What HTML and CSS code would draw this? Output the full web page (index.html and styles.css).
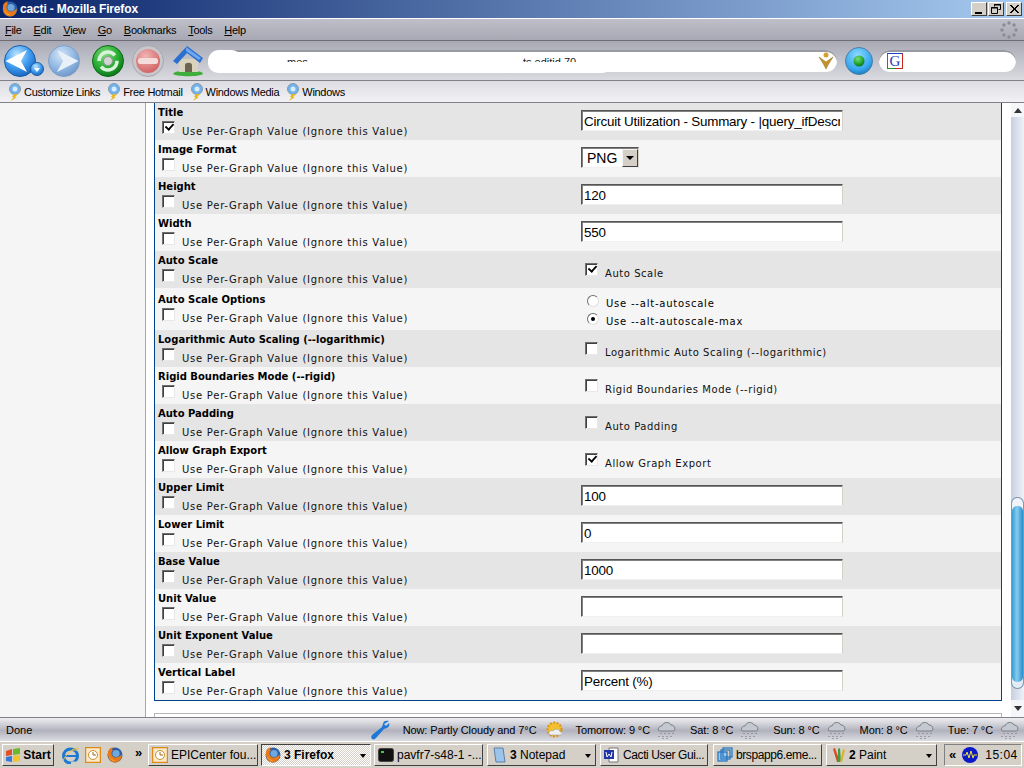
FILE: index.html
```html
<!DOCTYPE html>
<html lang="en">
<head>
<meta charset="utf-8">
<title>cacti - Mozilla Firefox</title>
<link rel="stylesheet" href="styles.css">
</head>
<body>
<svg class="defs" aria-hidden="true">
  <defs>
    <radialGradient id="gBlue" cx="40%" cy="30%" r="75%"><stop offset="0" stop-color="#bfe6ff"/><stop offset=".55" stop-color="#3f9cf0"/><stop offset="1" stop-color="#1560b8"/></radialGradient>
    <radialGradient id="gPale" cx="40%" cy="30%" r="75%"><stop offset="0" stop-color="#d4e4f6"/><stop offset=".6" stop-color="#8fb6e2"/><stop offset="1" stop-color="#6c94c6"/></radialGradient>
    <radialGradient id="gGreen" cx="40%" cy="30%" r="75%"><stop offset="0" stop-color="#7edc7e"/><stop offset=".6" stop-color="#25a830"/><stop offset="1" stop-color="#0b6f18"/></radialGradient>
    <radialGradient id="gStop" cx="40%" cy="30%" r="75%"><stop offset="0" stop-color="#f0b4b4"/><stop offset="1" stop-color="#d05f5f"/></radialGradient>
    <radialGradient id="gCyan" cx="45%" cy="30%" r="75%"><stop offset="0" stop-color="#8fdcff"/><stop offset=".7" stop-color="#35a6ee"/><stop offset="1" stop-color="#166fb8"/></radialGradient>
    <symbol id="i-ff" viewBox="0 0 16 16"><circle cx="8" cy="8" r="7.5" fill="#2a5fa8"/><circle cx="9" cy="6.5" r="3.6" fill="#6fa8dc"/><path d="M1 6C1 2 4 .5 6 .5 4.800 2 5 3 6 3.500 4.200 4.500 4 7 5.500 9 7.500 11.500 11.500 11 14.800 7.500 15 12 12 15.500 8 15.500 3.500 15.500 .5 11.500 1 6Z" fill="#e8791a"/><path d="M2 9C3 12 5.500 14.200 8.500 14 5 13 3.500 11 2 9Z" fill="#f9c23c"/></symbol>
    <symbol id="i-back" viewBox="0 0 32 32"><circle cx="16" cy="16" r="15.500" fill="url(#gBlue)" stroke="#1a5ea8"/><path d="M1.500 16 23 5 17 16 23 27Z" fill="#fff"/></symbol>
    <symbol id="i-fwd" viewBox="0 0 32 32"><circle cx="16" cy="16" r="15.500" fill="url(#gPale)" stroke="#7f9fc6"/><path d="M30.500 16 9 5 15 16 9 27Z" fill="#e8f0fa"/></symbol>
    <symbol id="i-reload" viewBox="0 0 32 32"><circle cx="16" cy="16" r="15.500" fill="url(#gGreen)" stroke="#0d6a1a"/><circle cx="16" cy="16" r="9" fill="none" stroke="#d8f4d8" stroke-width="3.500" stroke-dasharray="22 6"/><circle cx="16" cy="16" r="4.500" fill="#d4d4d4" stroke="#8a9a8a"/></symbol>
    <symbol id="i-stop" viewBox="0 0 32 32"><circle cx="16" cy="16" r="15.500" fill="#c8c8cc" stroke="#a8a8ac"/><circle cx="16" cy="16" r="12" fill="url(#gStop)"/><rect x="6" y="13" width="20" height="6" rx="2.500" fill="#f4dcdc"/></symbol>
    <symbol id="i-home" viewBox="0 0 32 32"><path d="M1 29C3 26 6 27 8 26H25C27 27 30 26 31 29 27 32 5 32 1 29Z" fill="#3fae3a"/><path d="M7 14H26V27H7Z" fill="#d9d2bc"/><path d="M13 27V20C13 17 20 17 20 20V27Z" fill="#6b6450"/><path d="M8 4V11L10 9V2Z" fill="#b8b0a0"/><path d="M1 16 15 1 31 13 28 18 15 8 5 19Z" fill="#2b6fd0"/><path d="M14 2 29 13 27 15 14 6Z" fill="#6ea8ee"/></symbol>
    <symbol id="i-go" viewBox="0 0 28 28"><circle cx="14" cy="14" r="13.500" fill="url(#gCyan)" stroke="#4a7fa8"/><circle cx="14" cy="14" r="5.500" fill="url(#gGreen)"/></symbol>
    <symbol id="i-bm" viewBox="0 0 14 18"><circle cx="7" cy="6" r="5.500" fill="#6fb4ee" stroke="#8a9aa8"/><circle cx="7" cy="6" r="2.500" fill="#d8ecfc"/><path d="M6 11H10L7 14 9 14 3 18 5.500 14 4 14Z" fill="#e8b820"/></symbol>
    <symbol id="i-rain" viewBox="0 0 21 20"><path d="M3 11C1 8 4 6 6 6 7 2 13 1 15 5 18 5 20 8 18 11Z" fill="#c4c8d0" stroke="#7a7f88"/><path d="M5 13V15M9 13V15M13 13V15M17 13V15M3 16V18M7 16V19M11 16V19M15 16V18" stroke="#6c7078" stroke-dasharray="1 1" fill="none"/></symbol>
    <symbol id="i-clock" viewBox="0 0 16 16"><rect x=".5" y=".5" width="15" height="15" fill="#fbe9c8" stroke="#dd8a1c" stroke-width="1.500"/><circle cx="8" cy="8" r="4.500" fill="#fff" stroke="#c89030"/><path d="M8 5V8H11" fill="none" stroke="#a06818"/></symbol>
  </defs>
</svg>
<div class="window">
  <header class="titlebar">
    <svg class="ic16"><use href="#i-ff"/></svg>
    <span class="title-text">cacti - Mozilla Firefox</span>
    <div class="win-btns">
      <span class="win-btn"><svg width="14" height="12"><rect x="3" y="9" width="7" height="2" fill="#000"/></svg></span>
      <span class="win-btn"><svg width="14" height="12"><path d="M5.500 3.500V1.500H11.500V6.500H9.500M2.500 4.500H8.500V10.500H2.500Z" fill="none" stroke="#000"/><path d="M5 2H12M2 5H9" stroke="#000"/></svg></span>
      <span class="win-btn win-close"><svg width="14" height="12"><path d="M3 2 11 10M4 2 12 10M11 2 3 10M12 2 4 10" stroke="#000"/></svg></span>
    </div>
  </header>
  <nav class="menubar">
    <span class="menu"><u>F</u>ile</span>
    <span class="menu"><u>E</u>dit</span>
    <span class="menu"><u>V</u>iew</span>
    <span class="menu"><u>G</u>o</span>
    <span class="menu"><u>B</u>ookmarks</span>
    <span class="menu"><u>T</u>ools</span>
    <span class="menu"><u>H</u>elp</span>
    <svg class="throbber" width="18" height="18"><g fill="#8c8c94"><circle cx="9" cy="2" r="1.700"/><circle cx="14" cy="4" r="1.700"/><circle cx="16" cy="9" r="1.700"/><circle cx="14" cy="14" r="1.700"/><circle cx="9" cy="16" r="1.700"/><circle cx="4" cy="14" r="1.700"/><circle cx="2" cy="9" r="1.700"/><circle cx="4" cy="4" r="1.700"/></g></svg>
  </nav>
  <div class="navbar">
    <span class="back-wrap">
      <svg class="ic32"><use href="#i-back"/></svg>
      <svg class="back-drop" width="14" height="14"><circle cx="7" cy="7" r="6.500" fill="url(#gBlue)" stroke="#1a5ea8"/><path d="M4 6H10L7 10Z" fill="#fff"/></svg>
    </span>
    <svg class="ic32 fwd"><use href="#i-fwd"/></svg>
    <svg class="ic32 reload"><use href="#i-reload"/></svg>
    <svg class="ic32 stop"><use href="#i-stop"/></svg>
    <svg class="ic32 home"><use href="#i-home"/></svg>
    <div class="urlbar">
      <span class="url-blob"></span>
      <span class="url-blob-left"></span>
      <span class="url-frag frag-a">mes</span>
      <span class="url-frag frag-b">ts editid 70</span>
      <svg class="url-icon" width="16" height="18" viewBox="0 0 16 18"><circle cx="8" cy="3" r="2.500" fill="#d8a030"/><path d="M1 5 8 10 15 5 10 13 8 17 6 13Z" fill="#c89028" stroke="#8a6a20" stroke-width=".5"/></svg>
    </div>
    <svg class="go" width="28" height="28"><use href="#i-go"/></svg>
    <div class="searchbar">
      <svg width="16" height="16" class="g-box"><rect x=".5" y=".5" width="15" height="15" fill="#fff" stroke="#2a8a2a"/><path d="M15.500 .5V15.500H8" fill="none" stroke="#d02020"/><path d="M.5 .5H15.500" stroke="#2040c0"/><text x="2.500" y="13" class="g-text">G</text></svg>
    </div>
  </div>
  <div class="bookmarks">
    <span class="bm"><svg class="bm-ic"><use href="#i-bm"/></svg>Customize Links</span>
    <span class="bm"><svg class="bm-ic"><use href="#i-bm"/></svg>Free Hotmail</span>
    <span class="bm"><svg class="bm-ic"><use href="#i-bm"/></svg>Windows Media</span>
    <span class="bm"><svg class="bm-ic"><use href="#i-bm"/></svg>Windows</span>
  </div>
  <div class="viewport">
    <aside class="sidebar"></aside>
    <main class="content">
      <section class="panel">
        <div class="row">
          <div class="lcell"><div class="lbl">Title</div><div class="use"><input class="cb" type="checkbox" checked><span class="use-text">Use Per-Graph Value (Ignore this Value)</span></div></div>
          <div class="rcell"><input class="txt" type="text" value="Circuit Utilization - Summary - |query_ifDescr|"></div>
        </div>
        <div class="row alt">
          <div class="lcell"><div class="lbl">Image Format</div><div class="use"><input class="cb" type="checkbox"><span class="use-text">Use Per-Graph Value (Ignore this Value)</span></div></div>
          <div class="rcell"><span class="sel-wrap"><select class="sel"><option>PNG</option></select><span class="sel-btn"></span></span></div>
        </div>
        <div class="row">
          <div class="lcell"><div class="lbl">Height</div><div class="use"><input class="cb" type="checkbox"><span class="use-text">Use Per-Graph Value (Ignore this Value)</span></div></div>
          <div class="rcell"><input class="txt" type="text" value="120"></div>
        </div>
        <div class="row alt">
          <div class="lcell"><div class="lbl">Width</div><div class="use"><input class="cb" type="checkbox"><span class="use-text">Use Per-Graph Value (Ignore this Value)</span></div></div>
          <div class="rcell"><input class="txt" type="text" value="550"></div>
        </div>
        <div class="row">
          <div class="lcell"><div class="lbl">Auto Scale</div><div class="use"><input class="cb" type="checkbox"><span class="use-text">Use Per-Graph Value (Ignore this Value)</span></div></div>
          <div class="rcell check-cell"><input class="cb" type="checkbox" checked><span class="use-text">Auto Scale</span></div>
        </div>
        <div class="row alt row-tall">
          <div class="lcell"><div class="lbl">Auto Scale Options</div><div class="use"><input class="cb" type="checkbox"><span class="use-text">Use Per-Graph Value (Ignore this Value)</span></div></div>
          <div class="rcell radio-cell">
            <div class="radio-line"><input class="rb" type="radio" name="as"><span class="radio-text">Use --alt-autoscale</span></div>
            <div class="radio-line"><input class="rb" type="radio" name="as" checked><span class="radio-text">Use --alt-autoscale-max</span></div>
          </div>
        </div>
        <div class="row">
          <div class="lcell"><div class="lbl">Logarithmic Auto Scaling (--logarithmic)</div><div class="use"><input class="cb" type="checkbox"><span class="use-text">Use Per-Graph Value (Ignore this Value)</span></div></div>
          <div class="rcell check-cell"><input class="cb" type="checkbox"><span class="use-text">Logarithmic Auto Scaling (--logarithmic)</span></div>
        </div>
        <div class="row alt">
          <div class="lcell"><div class="lbl">Rigid Boundaries Mode (--rigid)</div><div class="use"><input class="cb" type="checkbox"><span class="use-text">Use Per-Graph Value (Ignore this Value)</span></div></div>
          <div class="rcell check-cell"><input class="cb" type="checkbox"><span class="use-text">Rigid Boundaries Mode (--rigid)</span></div>
        </div>
        <div class="row">
          <div class="lcell"><div class="lbl">Auto Padding</div><div class="use"><input class="cb" type="checkbox"><span class="use-text">Use Per-Graph Value (Ignore this Value)</span></div></div>
          <div class="rcell check-cell"><input class="cb" type="checkbox"><span class="use-text">Auto Padding</span></div>
        </div>
        <div class="row alt">
          <div class="lcell"><div class="lbl">Allow Graph Export</div><div class="use"><input class="cb" type="checkbox"><span class="use-text">Use Per-Graph Value (Ignore this Value)</span></div></div>
          <div class="rcell check-cell"><input class="cb" type="checkbox" checked><span class="use-text">Allow Graph Export</span></div>
        </div>
        <div class="row">
          <div class="lcell"><div class="lbl">Upper Limit</div><div class="use"><input class="cb" type="checkbox"><span class="use-text">Use Per-Graph Value (Ignore this Value)</span></div></div>
          <div class="rcell"><input class="txt" type="text" value="100"></div>
        </div>
        <div class="row alt">
          <div class="lcell"><div class="lbl">Lower Limit</div><div class="use"><input class="cb" type="checkbox"><span class="use-text">Use Per-Graph Value (Ignore this Value)</span></div></div>
          <div class="rcell"><input class="txt" type="text" value="0"></div>
        </div>
        <div class="row">
          <div class="lcell"><div class="lbl">Base Value</div><div class="use"><input class="cb" type="checkbox"><span class="use-text">Use Per-Graph Value (Ignore this Value)</span></div></div>
          <div class="rcell"><input class="txt" type="text" value="1000"></div>
        </div>
        <div class="row alt">
          <div class="lcell"><div class="lbl">Unit Value</div><div class="use"><input class="cb" type="checkbox"><span class="use-text">Use Per-Graph Value (Ignore this Value)</span></div></div>
          <div class="rcell"><input class="txt" type="text" value=""></div>
        </div>
        <div class="row">
          <div class="lcell"><div class="lbl">Unit Exponent Value</div><div class="use"><input class="cb" type="checkbox"><span class="use-text">Use Per-Graph Value (Ignore this Value)</span></div></div>
          <div class="rcell"><input class="txt" type="text" value=""></div>
        </div>
        <div class="row alt">
          <div class="lcell"><div class="lbl">Vertical Label</div><div class="use"><input class="cb" type="checkbox"><span class="use-text">Use Per-Graph Value (Ignore this Value)</span></div></div>
          <div class="rcell"><input class="txt" type="text" value="Percent (%)"></div>
        </div>
      </section>
      <div class="next-panel"></div>
    </main>
    <div class="scrollbar">
      <span class="sb-btn"><span class="arrow-up"></span></span>
      <span class="sb-thumb"></span>
      <span class="sb-btn sb-down"><span class="arrow-down"></span></span>
    </div>
  </div>
  <footer class="statusbar">
    <span class="done">Done</span>
    <svg class="wrench" width="19" height="20" viewBox="0 0 19 20"><path d="M18 1C15 0 12 1 12 4L11 7 1 15C0 16 0 18 1 19 3 20 4 19 5 18L13 9 16 8C18 7 19 4 18 3L15 6 13 4Z" fill="#1f78d6"/></svg>
    <span class="wx wx-now">Now: Partly Cloudy and 7°C</span>
    <svg class="wx-sun" width="21" height="21" viewBox="0 0 21 21"><circle cx="10.500" cy="10.500" r="7" fill="#f2c030" stroke="#d8901a" stroke-dasharray="2 1.500" stroke-width="2"/><path d="M5 15C4 12 8 11 9 12 11 9 16 10 16 13 19 13 19 16 16 16H6Z" fill="#eef0f4" stroke="#9aa0a8" stroke-width=".6"/></svg>
    <span class="wx wx-tom">Tomorrow: 9 °C</span><svg class="rain"><use href="#i-rain"/></svg>
    <span class="wx">Sat: 8 °C</span><svg class="rain"><use href="#i-rain"/></svg>
    <span class="wx">Sun: 8 °C</span><svg class="rain"><use href="#i-rain"/></svg>
    <span class="wx">Mon: 8 °C</span><svg class="rain"><use href="#i-rain"/></svg>
    <span class="wx">Tue: 7 °C</span><svg class="rain"><use href="#i-rain"/></svg>
  </footer>
  <div class="taskbar">
    <span class="start">
      <svg width="16" height="15" viewBox="0 0 16 15"><path d="M1 3 7 1V7L1 8Z" fill="#e0502a"/><path d="M8 1 15 0V6L8 7Z" fill="#6cb82c"/><path d="M1 9 7 8V14L1 13Z" fill="#3a78d8"/><path d="M8 8 15 7V13L8 14Z" fill="#f2c42a"/></svg>
      <b class="start-text">Start</b>
    </span>
    <span class="quick">
      <svg width="17" height="17" viewBox="0 0 17 17"><circle cx="8.500" cy="9" r="7" fill="none" stroke="#1c78d0" stroke-width="3"/><path d="M3 9H14" stroke="#1c78d0" stroke-width="2"/><path d="M9 16H15" stroke="#d4d0c8" stroke-width="3"/><path d="M1 14C3 8 11 1 16 1 17 4 13 3 10 3" fill="none" stroke="#f0c040"/></svg>
      <svg class="ic16"><use href="#i-clock"/></svg>
      <svg class="ic16"><use href="#i-ff"/></svg>
    </span>
    <span class="chev">»</span>
    <span class="tb w110"><svg class="ic16"><use href="#i-clock"/></svg><span class="tb-text">EPICenter fou...</span></span>
    <span class="tb w110 active"><svg class="ic16"><use href="#i-ff"/></svg><span class="tb-text"><b>3</b> <b>Firefox</b></span><span class="tb-arrow"></span></span>
    <span class="tb w109a"><svg class="ic16" viewBox="0 0 16 16"><rect x=".5" y="1.500" width="15" height="13" rx="2" fill="#111" stroke="#444"/><rect x="3" y="4" width="3" height="2" fill="#3fd03f"/></svg><span class="tb-text">pavfr7-s48-1 -...</span></span>
    <span class="tb w109a"><svg class="ic16" viewBox="0 0 16 16"><path d="M3 1H12L14 15H5Z" fill="#9cc4ea" stroke="#5a80a8"/></svg><span class="tb-text"><b>3</b> Notepad</span><span class="tb-arrow"></span></span>
    <span class="tb w109"><svg class="ic16" viewBox="0 0 16 16"><path d="M5 1H14V15H5Z" fill="#fff" stroke="#777"/><rect x="0" y="3" width="10" height="9" fill="#2035a8"/><path d="M2 5 3 10 5 7 7 10 8 5" fill="none" stroke="#fff"/></svg><span class="tb-text tb-tight">Cacti User Gui...</span></span>
    <span class="tb w109a"><svg class="ic16" viewBox="0 0 16 16"><rect x="1" y="5" width="9" height="9" fill="#9cc8ee" stroke="#2a78c0" stroke-width="1.300"/><rect x="4" y="3" width="9" height="9" fill="none" stroke="#2a78c0" stroke-width="1.300"/><rect x="6" y="1" width="9" height="9" fill="none" stroke="#2a78c0" stroke-width="1.300"/></svg><span class="tb-text tb-tight">brspapp6.eme...</span></span>
    <span class="tb w111"><svg class="ic16" viewBox="0 0 16 16"><path d="M3 2 7 15H10L5 1Z" fill="#d84a2a"/><path d="M8 2 8 15H11L10 1Z" fill="#40a040"/><path d="M13 2 10 15H12L15 3Z" fill="#e0b020"/></svg><span class="tb-text"><b>2</b> Paint</span><span class="tb-arrow"></span></span>
    <span class="tray">
      <span class="tray-chev">«</span>
      <svg width="16" height="16" viewBox="0 0 16 16"><circle cx="8" cy="8" r="8" fill="#0a18c8"/><path d="M1 8H4L5 5 7 11 9 4 11 11 12 8H15" fill="none" stroke="#f0e030"/></svg>
      <span class="clock">15:04</span>
    </span>
  </div>
</div>
</body>
</html>
```

FILE: styles.css
```css
* { box-sizing: border-box; }
html, body { margin: 0; height: 100%; overflow: hidden; }
body { font-family: "Liberation Sans", Arial, sans-serif; color: #000; }
.defs { position: absolute; width: 0; height: 0; }
.window { width: 1024px; height: 768px; display: flex; flex-direction: column; }
.ic16 { width: 16px; height: 16px; flex: none; }
.ic32 { width: 32px; height: 32px; flex: none; display: block; }

.titlebar { height: 19px; flex: none; display: flex; align-items: center; padding-left: 2px; background: linear-gradient(90deg, #0a246a, #a6caf0); border-bottom: 1px solid #fff; }
.title-text { margin-left: 2px; font-size: 12px; font-weight: bold; letter-spacing: -.15px; color: #fff; }
.win-btns { margin-left: auto; margin-right: 2px; display: flex; gap: 1px; }
.win-btn { width: 16px; height: 14px; display: flex; align-items: center; justify-content: center; background: #d4d0c8; border: 1px solid; border-color: #fff #404040 #404040 #fff; }
.win-close { margin-left: 1px; }

.menubar { height: 22px; flex: none; display: flex; align-items: center; padding-left: 5px; gap: 12px; font-size: 11px; letter-spacing: -.3px; background: linear-gradient(#bfbfc9, #a8a8b4); border-bottom: 1px solid #6e6e76; }
.throbber { margin-left: auto; margin-right: 6px; }

.navbar { height: 40px; flex: none; display: flex; align-items: center; padding-left: 4px; background: linear-gradient(#a9a9b5, #dadae0); border-bottom: 1px solid #808088; }
.back-wrap { position: relative; width: 32px; height: 32px; flex: none; }
.back-drop { position: absolute; left: 26px; top: 17px; }
.fwd { margin-left: 12px; }
.reload { margin-left: 12px; }
.stop { margin-left: 8px; }
.home { margin-left: 8px; }
.urlbar { position: relative; margin-left: 9px; width: 624px; height: 22px; flex: none; background: #fff; border-radius: 11px; box-shadow: inset 0 2px 0 #9a9aa2; }
.url-blob { position: absolute; left: -5px; top: 3px; width: 405px; height: 20px; background: #fff; border-radius: 10px; }
.url-blob-left { position: absolute; left: -5px; top: 0; width: 34px; height: 22px; background: #fff; border-radius: 11px; }
.url-frag { position: absolute; top: 8px; height: 4px; overflow: hidden; font-size: 11px; line-height: 8px; color: #222; }
.frag-a { left: 74px; }
.frag-b { left: 310px; }
.url-icon { position: absolute; right: 3px; top: 2px; }
.go { margin-left: 8px; flex: none; }
.searchbar { margin-left: 6px; width: 137px; height: 22px; flex: none; display: flex; align-items: center; padding-left: 8px; background: #fff; border-radius: 11px; box-shadow: inset 0 2px 0 #9a9aa2; }
.g-text { font: 15px "Liberation Serif", serif; fill: #2040c0; }

.bookmarks { height: 22px; flex: none; display: flex; align-items: center; padding: 1px 0 0 8px; gap: 7px; font-size: 11px; letter-spacing: -.3px; background: linear-gradient(#dcdce2, #f2f2f5); border-bottom: 1px solid #808088; }
.bm { display: flex; align-items: center; gap: 2px; }
.bm-ic { width: 14px; height: 18px; flex: none; }

.viewport { flex: 1; min-height: 0; display: flex; overflow: hidden; background: #fff; }
.sidebar { width: 146px; flex: none; background: #f5f5f5; border-right: 1px solid #aca899; }
.content { flex: 1; min-width: 0; padding: 0 9px 0 8px; }
.panel { border: 1px solid #00438c; border-top: 0; }
.row { height: 37px; display: grid; grid-template-columns: 426px 1fr; background: #e5e5e5; font-family: "DejaVu Sans", Verdana, sans-serif; font-size: 10px; }
.row.alt { background: #f5f5f5; }
.row-tall { height: 42px; }
.row-tall .lcell { padding-top: 2px; }
.lbl { font-weight: bold; line-height: 12px; padding: 4px 0 0 3px; box-sizing: content-box; height: 12px; white-space: nowrap; }
.use { display: flex; align-items: flex-start; padding-left: 7px; }
.cb { appearance: none; width: 13px; height: 13px; margin: 2px 7px 0 0; flex: none; background: #fff; border: 1px solid; border-color: #6f6f6f #e8e8e8 #e8e8e8 #6f6f6f; box-shadow: inset 1px 1px 0 #404040; position: relative; }
.cb:checked::after { content: ""; position: absolute; left: 2px; top: 1px; width: 7px; height: 4px; border: solid #000; border-width: 0 0 2px 2px; transform: rotate(-48deg) scale(.9); }
.use-text { margin-top: 7px; line-height: 12px; white-space: nowrap; letter-spacing: .74px; color: #111; }
.rcell { padding-top: 7px; }
.txt { display: block; width: 262px; height: 21px; padding: 1px 2px 0; margin: 0; font: 13.4px "Liberation Sans", Arial, sans-serif; letter-spacing: -.2px; color: #000; background: #fff; border: 1px solid; border-color: #555 #d4d0c8 #f0f0f0 #555; box-shadow: inset 1px 1px 0 #808080; outline: 0; }
.sel-wrap { position: relative; display: block; width: 58px; height: 21px; }
.sel { appearance: none; display: block; width: 58px; height: 21px; margin: 0; padding: 1px 0 0 5px; font: 14px "Liberation Sans", Arial, sans-serif; background: #fff; border: 1px solid; border-color: #555 #d4d0c8 #f0f0f0 #555; border-radius: 0; box-shadow: inset 1px 1px 0 #808080; }
.sel-btn { position: absolute; right: 1px; top: 2px; width: 16px; height: 18px; background: #d4d0c8; border: 1px solid; border-color: #f4f4f0 #404040 #404040 #f4f4f0; }
.sel-btn::after { content: ""; position: absolute; left: 3px; top: 6px; border: 4px solid transparent; border-top: 4px solid #000; border-bottom: 0; }
.check-cell { display: flex; align-items: flex-start; padding: 10px 0 0 4px; }
.check-cell .cb { margin-top: 2px; }
.check-cell .use-text { letter-spacing: .55px; }
.radio-cell { padding: 7px 0 0 6px; }
.radio-line { display: flex; align-items: flex-start; height: 18px; }
.rb { appearance: none; width: 12px; height: 12px; margin: 0 7px 0 0; flex: none; border-radius: 50%; background: #fff; border: 1px solid; border-color: #707070 #e0e0e0 #e0e0e0 #707070; position: relative; }
.rb:checked::after { content: ""; position: absolute; left: 3px; top: 3px; width: 4px; height: 4px; border-radius: 50%; background: #000; }
.radio-text { margin-top: 3px; line-height: 12px; white-space: nowrap; letter-spacing: .78px; }
.next-panel { margin-top: 12px; height: 40px; border: 1px solid #b8b8b8; background: #fff; }

.scrollbar { width: 13px; flex: none; display: flex; flex-direction: column; background: linear-gradient(90deg, #c6cfe2, #eef1f7); }
.sb-btn { height: 14px; flex: none; display: flex; align-items: center; justify-content: center; background: #f4f6fa; }
.arrow-up { border: 4px solid transparent; border-bottom: 5px solid #333; border-top: 0; }
.arrow-down { border: 4px solid transparent; border-top: 5px solid #333; border-bottom: 0; }
.sb-thumb { margin-top: 380px; height: 192px; flex: none; border-radius: 6px; background: linear-gradient(90deg, #3a9cd4, #86cdf0 45%, #2c8cc8); border: 1px solid #8a96a8; box-shadow: inset 0 8px 0 #f0f3f8, inset 0 -6px 0 #e4ebf4; }
.sb-down { margin-top: auto; height: 17px; }

.statusbar { height: 24px; flex: none; display: flex; align-items: center; font-size: 11px; padding: 0 4px 0 6px; background: linear-gradient(#eeeef1, #b2b2be 55%, #dcdce2); border-top: 1px solid #808088; }
.wrench { margin-left: auto; flex: none; }
.wx { white-space: nowrap; margin-left: 13px; letter-spacing: -.1px; }
.wx-tom { margin-left: 11px; }
.wx-sun { margin-left: 7px; flex: none; }
.rain { width: 21px; height: 20px; margin-left: 6px; flex: none; }

.taskbar { height: 27px; flex: none; display: flex; align-items: center; padding: 0 2px; font-size: 12px; background: #d4d0c8; border-top: 1px solid #fff; }
.start { width: 52px; height: 22px; flex: none; display: flex; align-items: center; justify-content: center; gap: 2px; background: #d4d0c8; border: 1px solid; border-color: #fff #404040 #404040 #fff; }
.start-text { font-size: 12px; }
.quick { display: flex; gap: 6px; align-items: center; margin-left: 8px; flex: none; }
.chev { margin: -6px 3px 0 12px; font-weight: bold; width: 10px; flex: none; font-size: 13px; }
.tb { height: 22px; flex: none; display: flex; align-items: center; gap: 3px; margin-right: 3px; padding: 0 3px; background: #d4d0c8; border: 1px solid; border-color: #fff #404040 #404040 #fff; position: relative; overflow: hidden; }
.w110 { width: 110px; }
.w109a { width: 109px; margin-right: 4px; }
.w109 { width: 108px; margin-right: 5px; }
.w111 { width: 111px; margin-right: 7px; }
.active { border-color: #404040 #fff #fff #404040; background: repeating-conic-gradient(#fff 0 25%, #d4d0c8 0 50%) 0 0 / 2px 2px; }
.tb-text { white-space: nowrap; }
.tb-tight { letter-spacing: -.4px; }
.tb-arrow { position: absolute; right: 4px; top: 9px; border-style: solid; border-color: #000 transparent transparent; border-width: 4px 3.500px 0; }
.tray { flex: 1; min-width: 0; height: 22px; display: flex; align-items: center; padding-left: 4px; gap: 6px; border: 1px solid; border-color: #808080 #fff #fff #808080; }
.tray-chev { font-weight: bold; font-size: 13px; margin-top: -2px; }
.clock { margin-left: 1px; letter-spacing: .5px; font-size: 12px; }
```
